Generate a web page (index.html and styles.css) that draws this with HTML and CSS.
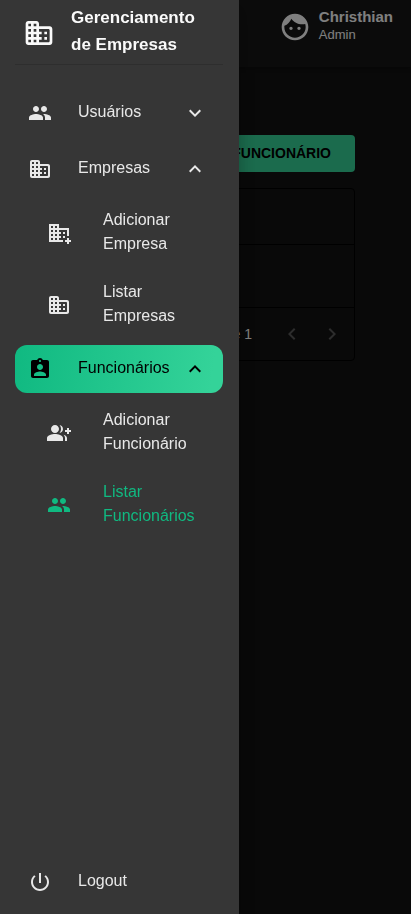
FILE: index.html
```html
<!DOCTYPE html>
<html lang="pt-BR">
<head>
<meta charset="utf-8">
<meta name="viewport" content="width=device-width, initial-scale=1">
<title>Gerenciamento de Empresas</title>
<link rel="stylesheet" href="styles.css">
</head>
<body>
<svg class="sprite" aria-hidden="true">
  <symbol id="i-business" viewBox="0 0 24 24"><path d="M12 7V5c0-1.100-.9-2-2-2H4c-1.100 0-2 .9-2 2v14c0 1.100.9 2 2 2h16c1.100 0 2-.9 2-2V9c0-1.100-.9-2-2-2h-8zM6 19H4v-2h2v2zm0-4H4v-2h2v2zm0-4H4V9h2v2zm0-4H4V5h2v2zm4 12H8v-2h2v2zm0-4H8v-2h2v2zm0-4H8V9h2v2zm0-4H8V5h2v2zm9 12h-7v-2h2v-2h-2v-2h2v-2h-2V9h7c.55 0 1 .45 1 1v8c0 .55-.45 1-1 1zm-1-8h-2v2h2v-2zm0 4h-2v2h2v-2z"/></symbol>
  <symbol id="i-domain-add" viewBox="0 0 24 24"><path d="M12 7V3H2v18h14v-2h-4v-2h2v-2h-2v-2h2v-2h-2V9h8v6h2V7H12zM6 19H4v-2h2v2zm0-4H4v-2h2v2zm0-4H4V9h2v2zm0-4H4V5h2v2zm4 12H8v-2h2v2zm0-4H8v-2h2v2zm0-4H8V9h2v2zm0-4H8V5h2v2zm14 12v2h-2v2h-2v-2h-2v-2h2v-2h2v2h2zm-6-8h-2v2h2v-2zm0 4h-2v2h2v-2z"/></symbol>
  <symbol id="i-people" viewBox="0 0 24 24"><path d="M16 11c1.660 0 2.990-1.340 2.990-3S17.660 5 16 5c-1.660 0-3 1.340-3 3s1.340 3 3 3zm-8 0c1.660 0 2.990-1.340 2.990-3S9.660 5 8 5C6.340 5 5 6.340 5 8s1.340 3 3 3zm0 2c-2.330 0-7 1.170-7 3.500V19h14v-2.500c0-2.330-4.670-3.500-7-3.500zm8 0c-.29 0-.62.02-.97.05 1.160.84 1.970 1.970 1.970 3.450V19h6v-2.500c0-2.330-4.670-3.500-7-3.500z"/></symbol>
  <symbol id="i-group-add" viewBox="0 0 24 24"><path d="M22 9V7h-2v2h-2v2h2v2h2v-2h2V9zM8 12c2.210 0 4-1.790 4-4s-1.790-4-4-4-4 1.790-4 4 1.790 4 4 4zm0 1c-2.670 0-8 1.340-8 4v3h16v-3c0-2.660-5.330-4-8-4zm4.510-8.950C13.430 5.110 14 6.490 14 8s-.57 2.890-1.490 3.950C14.470 11.700 16 10.040 16 8s-1.530-3.700-3.490-3.950zm4.020 9.780C17.420 14.660 18 15.700 18 17v3h2v-3c0-1.450-1.590-2.510-3.470-3.170z"/></symbol>
  <symbol id="i-badge" viewBox="0 0 24 24"><path d="M19 3h-4.180C14.400 1.840 13.300 1 12 1c-1.300 0-2.400.84-2.820 2H5c-1.100 0-2 .9-2 2v14c0 1.100.9 2 2 2h14c1.100 0 2-.9 2-2V5c0-1.100-.9-2-2-2zm-7 0c.55 0 1 .45 1 1s-.45 1-1 1-1-.45-1-1 .45-1 1-1zm0 4c1.660 0 3 1.340 3 3s-1.340 3-3 3-3-1.340-3-3 1.340-3 3-3zm6 12H6v-1.400c0-2 4-3.100 6-3.100s6 1.100 6 3.100V19z"/></symbol>
  <symbol id="i-power" viewBox="0 0 24 24"><path d="M13 3h-2v10h2V3zm4.830 2.170-1.420 1.420C17.990 7.860 19 9.810 19 12c0 3.870-3.130 7-7 7s-7-3.130-7-7c0-2.190 1.010-4.140 2.580-5.420L6.170 5.170C4.230 6.820 3 9.260 3 12c0 4.970 4.030 9 9 9s9-4.030 9-9c0-2.740-1.230-5.180-3.170-6.830z"/></symbol>
  <symbol id="i-face" viewBox="0 0 24 24"><path d="M9 11.750c-.69 0-1.250.56-1.250 1.250s.56 1.250 1.250 1.250 1.250-.56 1.250-1.250-.56-1.250-1.250-1.250zm6 0c-.69 0-1.250.56-1.250 1.250s.56 1.250 1.250 1.250 1.250-.56 1.250-1.250-.56-1.250-1.250-1.250zM12 2C6.480 2 2 6.480 2 12s4.480 10 10 10 10-4.480 10-10S17.520 2 12 2zm0 18c-4.410 0-8-3.590-8-8 0-.29.02-.58.05-.86 2.360-1.050 4.230-2.980 5.210-5.370C11.070 8.330 14.050 10 17.420 10c.78 0 1.530-.09 2.250-.26.21.71.33 1.470.33 2.260 0 4.410-3.590 8-8 8z"/></symbol>
  <symbol id="i-down" viewBox="0 0 24 24"><path d="M16.590 8.590 12 13.170 7.410 8.590 6 10l6 6 6-6z"/></symbol>
  <symbol id="i-up" viewBox="0 0 24 24"><path d="m12 8-6 6 1.410 1.410L12 10.830l4.590 4.580L18 14z"/></symbol>
  <symbol id="i-left" viewBox="0 0 24 24"><path d="M15.410 16.590 10.830 12l4.580-4.590L14 6l-6 6 6 6z"/></symbol>
  <symbol id="i-right" viewBox="0 0 24 24"><path d="M8.590 16.590 13.170 12 8.590 7.410 10 6l6 6-6 6z"/></symbol>
</svg>

<header class="topbar">
  <svg class="icon icon-large"><use href="#i-face"/></svg>
  <div class="user">
    <div class="user-name">Christhian</div>
    <div class="user-role">Admin</div>
  </div>
</header>

<main class="content">
  <button class="add-button" type="button">Adicionar Funcionário</button>
  <section class="grid-card">
    <div class="grid-head"></div>
    <div class="grid-body"></div>
    <footer class="pager">
      <span class="pager-text">1–1 de 1</span>
      <button class="pager-button" type="button" aria-label="Página anterior" disabled><svg class="icon"><use href="#i-left"/></svg></button>
      <button class="pager-button" type="button" aria-label="Próxima página" disabled><svg class="icon"><use href="#i-right"/></svg></button>
    </footer>
  </section>
</main>

<div class="backdrop"></div>

<aside class="drawer">
  <div class="brand">
    <svg class="icon icon-large"><use href="#i-business"/></svg>
    <h1 class="brand-name">Gerenciamento de Empresas</h1>
  </div>
  <nav class="menu">
    <button class="item" type="button" aria-expanded="false">
      <svg class="icon"><use href="#i-people"/></svg>
      <span class="label">Usuários</span>
      <svg class="icon"><use href="#i-down"/></svg>
    </button>
    <button class="item" type="button" aria-expanded="true">
      <svg class="icon"><use href="#i-business"/></svg>
      <span class="label">Empresas</span>
      <svg class="icon"><use href="#i-up"/></svg>
    </button>
    <a class="item sub" href="#adicionar-empresa">
      <svg class="icon"><use href="#i-domain-add"/></svg>
      <span class="label">Adicionar Empresa</span>
    </a>
    <a class="item sub" href="#listar-empresas">
      <svg class="icon"><use href="#i-business"/></svg>
      <span class="label">Listar Empresas</span>
    </a>
    <button class="item active" type="button" aria-expanded="true">
      <svg class="icon"><use href="#i-badge"/></svg>
      <span class="label">Funcionários</span>
      <svg class="icon"><use href="#i-up"/></svg>
    </button>
    <a class="item sub" href="#adicionar-funcionario">
      <svg class="icon"><use href="#i-group-add"/></svg>
      <span class="label">Adicionar Funcionário</span>
    </a>
    <a class="item sub current" href="#listar-funcionarios" aria-current="page">
      <svg class="icon"><use href="#i-people"/></svg>
      <span class="label">Listar Funcionários</span>
    </a>
    <button class="item logout" type="button">
      <svg class="icon"><use href="#i-power"/></svg>
      <span class="label">Logout</span>
    </button>
  </nav>
</aside>
</body>
</html>
```
FILE: styles.css
```css
* {
  box-sizing: border-box;
}

body {
  margin: 0;
  min-height: 100vh;
  background: #121212;
  color: #fff;
  font: 16px/24px "Liberation Sans", Arial, sans-serif;
}

button {
  border: 0;
  background: none;
  color: inherit;
  font: inherit;
  text-align: left;
  cursor: pointer;
}

.sprite {
  position: absolute;
  width: 0;
  height: 0;
}

.icon {
  flex: none;
  width: 24px;
  height: 24px;
  fill: currentColor;
}

.icon-large {
  width: 32px;
  height: 32px;
}

/* Page behind the drawer */
.topbar {
  display: flex;
  align-items: center;
  justify-content: flex-end;
  gap: 8px;
  height: 67px;
  padding: 0 18px 14px;
  background: #171717;
  box-shadow: 0 2px 4px rgba(0, 0, 0, 0.2);
}

.user {
  padding-bottom: 2px;
}

.user-name {
  font-size: 15px;
  font-weight: 700;
  line-height: 18px;
}

.user-role {
  font-size: 13px;
  line-height: 18px;
}

.content {
  display: flex;
  flex-direction: column;
  gap: 16px;
  padding: 68px 56px 24px;
}

.add-button {
  align-self: flex-end;
  padding: 6px 24px;
  border-radius: 4px;
  background: #36d69a;
  color: #000;
  font-size: 14px;
  font-weight: 700;
  line-height: 25px;
  text-transform: uppercase;
  white-space: nowrap;
}

.grid-card {
  border: 1px solid #000;
  border-radius: 4px;
}

.grid-head {
  height: 56px;
  border-bottom: 1px solid #000;
}

.grid-body {
  height: 63px;
  border-bottom: 1px solid #000;
}

.pager {
  display: flex;
  align-items: center;
  justify-content: flex-end;
  height: 52px;
  padding-right: 2px;
}

.pager-text {
  margin-right: 20px;
  font-size: 14px;
}

.pager-button {
  display: flex;
  padding: 8px;
  color: #5a5a5a;
}

/* Drawer */
.backdrop {
  position: fixed;
  inset: 0;
  background: rgba(0, 0, 0, 0.5);
}

.drawer {
  position: fixed;
  inset: 0 auto 0 0;
  display: flex;
  flex-direction: column;
  width: 239px;
  padding: 0 16px 8px 15px;
  background: #363636;
  color: #e8e8e8;
  box-shadow: 0 8px 16px rgba(0, 0, 0, 0.3);
}

.brand {
  display: flex;
  align-items: center;
  gap: 16px;
  padding: 4px 8px 3px;
  border-bottom: 1px solid #2e2e2e;
  color: #fafafa;
}

.brand-name {
  margin: 0;
  padding-bottom: 3px;
  font-size: 17px;
  font-weight: 700;
  line-height: 27px;
}

.menu {
  display: flex;
  flex: 1;
  flex-direction: column;
  gap: 8px;
  padding-top: 24px;
}

.item {
  display: flex;
  align-items: center;
  gap: 26px;
  min-height: 48px;
  padding: 7px 16px 7px 13px;
  border-radius: 12px;
  color: inherit;
  text-decoration: none;
}

.label {
  flex: 1;
  padding-bottom: 2px;
}

.item .label + .icon {
  margin-left: -26px;
}

.sub {
  gap: 32px;
  padding-left: 32px;
}

.active {
  background: linear-gradient(98deg, #10b981, #34d399 94%);
  color: #000;
}

.current {
  color: #10b981;
}

.logout {
  margin-top: auto;
}
```
